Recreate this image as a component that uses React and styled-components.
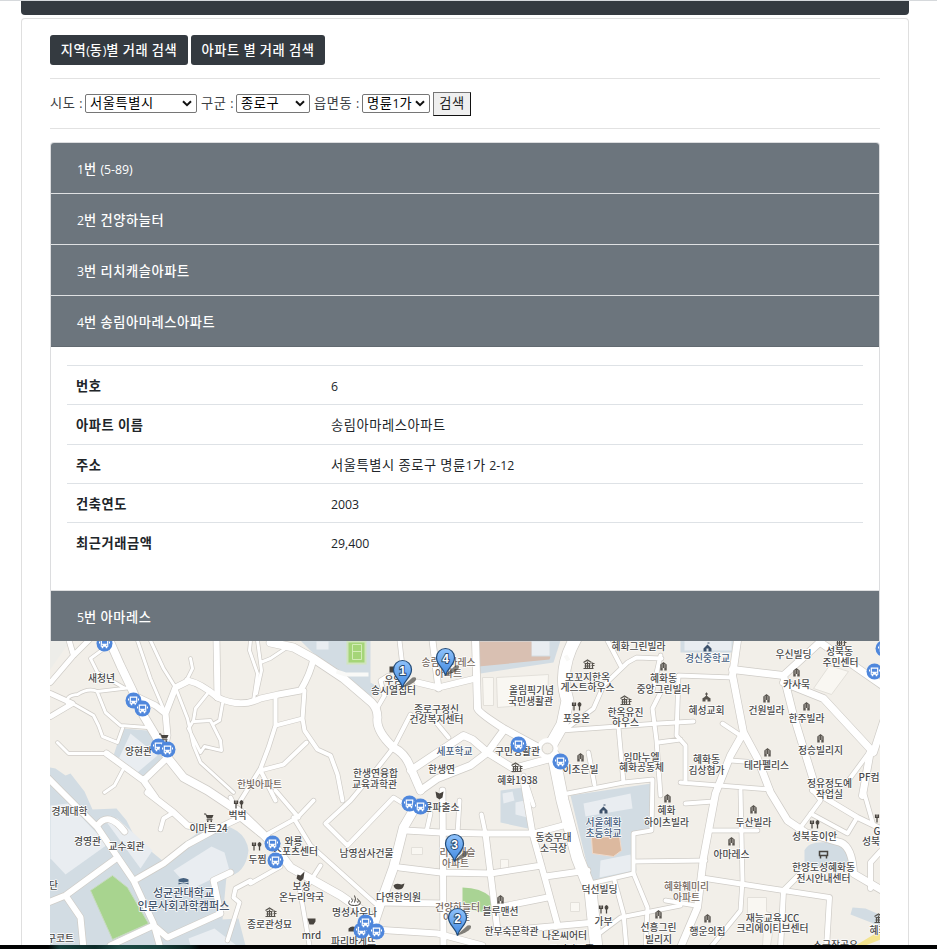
import React from 'react';
import styled, { createGlobalStyle } from 'styled-components';

const Global = createGlobalStyle`
  * { box-sizing: border-box; }
  html, body { margin: 0; background: #fff; overflow: hidden; }
  body { font: 12.3px/19px 'Open Sans', 'Noto Sans CJK KR', sans-serif; color: #212529; word-spacing: .4px; }
`;

const Page = styled.div`
  height: 949px;
  display: flex;
  flex-direction: column;
  border-top: 1px solid #d6d9dc;
  overflow: hidden;
`;
const NavEdge = styled.div`
  flex: 0 0 14px;
  margin: 0 28px 3px 21px;
  background: #343a40;
  border-radius: 0 0 4px 4px;
`;
const Card = styled.main`
  flex: 0 0 927px;
  margin: 0 28px 0 21px;
  border: 1px solid #dfdfdf;
  border-bottom: 0;
  border-radius: 4px 4px 0 0;
  padding: 16px 28px 0;
`;
const ButtonRow = styled.div`
  display: flex;
  gap: 3px;
  height: 44px;
  padding-bottom: 14px;
  border-bottom: 1px solid #e2e2e2;
`;
const TabButton = styled.button`
  width: ${(p) => p.$width}px;
  height: 30px;
  padding: 0;
  border: 0;
  border-radius: 3px;
  background: #343a40;
  color: #fff;
  font: inherit;
  font-weight: 500;
  word-spacing: inherit;
  white-space: nowrap;
`;
const SearchRow = styled.form`
  display: flex;
  align-items: center;
  height: 50px;
  border-bottom: 1px solid #e2e2e2;
  margin-bottom: 13px;
`;
const FieldLabel = styled.span`
  width: ${(p) => p.$width}px;
  white-space: nowrap;
  color: #3c4044;
`;
const Picker = styled.div`
  display: flex;
  align-items: center;
  justify-content: space-between;
  width: ${(p) => p.$width}px;
  height: 19px;
  margin-right: 4px;
  padding: 0 4px;
  border: 1px solid #767676;
  border-radius: 2px;
  background: #fff;
  color: #000;
  line-height: 17px;
  white-space: nowrap;
`;
const Chevron = styled.svg`
  flex: 0 0 10px;
  width: 10px;
  height: 7px;
`;
const SearchButton = styled.button`
  width: 38px;
  height: 24px;
  margin-left: -1px;
  padding: 0;
  border: 1px solid;
  border-color: #767676 #111 #111 #767676;
  background: #efefef;
  color: #222;
  font: inherit;
`;
const Accordion = styled.section`
  border: 1px solid #dcdddf;
  border-bottom: 0;
  border-radius: 4px 4px 0 0;
  overflow: hidden;
`;
const Item = styled.div`
  height: ${(p) => (p.$last ? 50 : 51)}px;
  padding: 17px 26px 0;
  background: #6c757d;
  color: #fff;
  font-weight: 500;
  border-bottom: ${(p) => (p.$last ? 0 : 1)}px solid ${(p) => (p.$open ? '#626a71' : '#dfe1e3')};
`;
const Detail = styled.div`
  height: 244px;
  padding: 18px 16px 0;
  border-bottom: 1px solid #dedfe0;
`;
const DetailRow = styled.div`
  display: grid;
  grid-template-columns: 255px 1fr;
  height: 39.3px;
  padding: 11px 9px 0;
  border-top: 1px solid #dee2e6;
`;
const Term = styled.div`
  font-weight: 600;
`;
const Value = styled.div``;
const KoreanRun = styled.span`
  font-family: 'Noto Sans CJK KR', sans-serif;
  font-size: 1.075em;
  letter-spacing: .6px;
  line-height: 1;
`;
const MapView = styled.svg`
  display: block;
  width: 830px;
  height: 304px;
  background: #f2efe9;
`;
const Taskbar = styled.footer`
  flex: 0 0 4px;
  background: linear-gradient(90deg, #020303 0 48px, #153f3b 60px, #0c2b29 95px, #1c4a44 120px, #17423d 155px, #0a211f 190px, #020303 200px);
`;

const Mixed = ({ children }) =>
  children.split(/([\uac00-\ud7a3]+)/).map((part, i) => (i % 2 ? <KoreanRun key={i}>{part}</KoreanRun> : part));

const MapLabel = styled.text`
  font: 500 ${(p) => p.$size || 9.8}px 'Noto Sans CJK KR', sans-serif;
  fill: ${(p) => p.$fill || '#484848'};
  word-spacing: 0;
  text-anchor: middle;
  paint-order: stroke;
  stroke: #fff;
  stroke-width: 1.4px;
  stroke-linejoin: round;
`;

const roads = [
  [5, 'M50 682L73 655L90 638M68 638L73 655M50 716L72 703L50 693'],
  [3, 'M67 704Q64 695 77 694Q88 687 97 691L131 687M105 647L90 658L97 672L123 687M97 692L105 712L120 725L147 727M72 703L93 715L98 725L102 736L117 742L122 728M57 742L68 753L106 753M123 768L114 785L104 792M137 640L150 678L165 713M150 640L163 668L175 687M190 658L192 668L186 680M175 687L187 718L193 745L200 762L233 792M207 693L195 708L193 720L188 728L200 752L204 746L221 750L220 740L210 720L194 721M222 703L219 720L212 724M250 640L249 650L257 673L253 700M257 640L261 670L256 693M260 662L270 658L285 648'],
  [6, 'M106 753L143 780L167 757M143 780L155 797M187 681L175 687L165 713L167 735L163 752M138 697L155 705L165 713M216 640L217 697'],
  [8, 'M108 638L120 665L132 690L143 715L155 735L167 757L183 777L207 790L240 812L272 843L290 867L340 895L373 918'],
  [6, 'M187 680Q201 683 217 697Q240 708 260 698L278 694L300 690Q310 673 313 658'],
  [8, 'M270 642L293 647L313 658L343 678L371 702Q377 708 377 717Q375 730 393 747Q405 753 410 767L420 790'],
  [4, 'M275 695L275 725L268 747L260 768L240 800M275 725L302 718L304 690M302 718L304 730L317 749L330 755L337 774L342 800M260 770L283 764L306 742M377 707L384 695L380 680L388 675M399 640L402 666M410 714L393 747L375 770L350 800L325 823L347 845L393 797L406 805M260 770L275 800M230 797L240 817'],
  [6, 'M417 682L438 687L475 678M432 640L438 688'],
  [7, 'M410 770L437 752L463 735L472 739L487 752L513 768L550 758M475 640L477 708Q478 712 503 728L540 748M420 790L437 778L470 765L487 752L503 730'],
  [4, 'M434 720L448 737M562 731L593 708L603 685L627 662L636 657L661 658M607 640L620 665M561 730L658 723L693 721M660 692L652 708L656 740L660 795M618 727L623 782M588 752L594 784M523 775L533 805'],
  [12, 'M575 638Q557 670 567 700L562 724L549 747M553 755L562 800L577 857L590 890L596 948'],
  [4, 'M567 793L623 782L652 779L651 830L633 833L633 873L647 907L645 948M660 655L652 690M658 742L680 739M678 675L676 735L685 745L685 782M678 675L732 677M722 723L740 735M730 760L757 762M680 782L770 789M665 900L695 905M633 861L705 860M685 803L713 801M710 830L757 830M740 790L742 880L740 910L710 947M870 750L845 784M863 790L873 825M800 827L820 800L812 789M810 813L847 833L856 818'],
  [7, 'M737 640L732 675L743 732L757 758L770 792L787 820L805 832L840 842Q852 847 853 873L882 890M743 732L730 755L715 793L703 857L697 907L680 947'],
  [7, 'M732 669L783 675L818 643M783 675L793 715L813 780M783 682L823 698L873 752L885 715M820 642L849 662L882 685M870 750L862 795'],
  [5, 'M812 790L857 817L882 829M880 851L870 862L870 888M705 878L783 890L829 897L826 948M803 870L783 890L780 948'],
  [6, 'M523 780L532 833L545 880L557 924M405 830L440 832L483 833L533 833L570 823M442 790L443 948M399 867L440 872L490 873L541 865M485 833L490 873L497 930M545 876L587 870M497 907L547 897M493 931L595 922M380 902L442 903M374 929L437 933L482 945'],
  [4, 'M481 814L485 833M590 883L633 873M600 932L620 917L680 905M614 880L623 913L626 948M430 813L426 831M459 800L457 833M293 817L310 845L377 905M268 833L297 817L313 800M320 865L306 887M250 883L280 866M299 887L309 945M275 790L298 817M227 940L239 902L233 897L235 888L250 880M173 812L163 818L160 829'],
  [9, 'M417 803L403 827L393 867L380 903L365 948'],
  [6, 'M45 775L60 790L97 827L133 880L153 923L160 948M45 903L65 895L117 857M65 895L80 917L83 948M137 878L163 863L187 844L213 830L240 817L260 833M110 945L153 925L167 937L220 913L213 880L230 872M97 825Q108 810 124 831M147 792L173 812L187 825L213 830'],
];

const labels = [
  [101, 681, '새청년'], [138, 754, '양현관'], [259, 787, '한빛아파트', '#76695f'], [69, 814, '경제대학'], [87, 844, '경영관'], [126, 849, '교수회관'], [208, 831, '이마트24'], [237, 818, '벅벅'],
  [183, 896, '성균관대학교', '#44546b', 11.1], [183, 909, '인문사회과학캠퍼스', '#44546b', 11.1], [53, 888, '단'], [60, 941, '구코트'], [257, 862, '두찜'], [293, 844, '와룡'], [295, 854, '스포츠센터'],
  [366, 856, '남영삼사건물'], [301, 889, '보성'], [301, 900, '온누리약국'], [269, 927, '종로관성묘'], [311, 938, 'mrd'], [354, 915, '명성사우나'], [353, 944, '파리바게뜨'], [398, 900, '다연한의원'], [441, 810, '륜파출소'],
  [457, 855, '리치캐슬', '#76695f'], [455, 866, '아파트', '#76695f'], [457, 910, '건양하늘터', '#76695f'], [456, 920, '아파트', '#76695f'], [500, 914, '블루맨션'], [511, 934, '한무숙문학관'], [564, 938, '나온씨어터'], [571, 952, '코너아트홀'],
  [553, 840, '동숭무대'], [553, 851, '소극장'], [603, 825, '서울혜화', '#455d7d'], [603, 836, '초등학교', '#455d7d'], [599, 892, '덕선빌딩'], [603, 924, '가부'], [658, 930, '선흥그린'], [658, 942, '빌리지'], [666, 813, '혜화'], [666, 825, '하이츠빌라'],
  [686, 889, '혜화훼미리', '#76695f'], [686, 900, '아파트', '#76695f'], [707, 934, '행운의집'], [731, 857, '아마레스'], [753, 825, '두산빌라'], [772, 921, '재능교육JCC'], [772, 931, '크리에이티브센터'], [814, 839, '성북동이안'], [823, 870, '한양도성혜화동'], [823, 881, '전시안내센터'], [882, 834, 'G25'], [875, 844, '성북동'], [878, 933, '혜화'], [835, 948, '소극장공유'],
  [829, 786, '정유정도예'], [829, 797, '작업실'], [873, 780, 'PF컴퍼'], [820, 753, '정승빌리지'], [806, 721, '한주빌라'], [796, 687, '카사묵'], [793, 657, '우신빌딩'], [839, 654, '성북동'], [840, 665, '주민센터'], [766, 713, '건원빌라'], [766, 768, '테라펠리스'], [706, 713, '혜성교회'], [707, 661, '경신중학교', '#455d7d'], [706, 762, '혜화동'], [706, 773, '김상협가'],
  [638, 649, '혜화그린빌라'], [663, 681, '혜화동'], [663, 692, '중앙그린빌라'], [587, 680, '모꼬지한옥'], [587, 690, '게스트하우스'], [625, 715, '한옥유진'], [625, 725, '하우스'], [576, 721, '포응온'], [641, 760, '임마누엘'], [641, 770, '혜화공동체'], [580, 772, '이조은빌'], [517, 754, '구민생활관'], [517, 783, '혜화1938'], [531, 693, '올림픽기념'], [530, 704, '국민생활관'],
  [454, 754, '세포학교', '#455d7d'], [441, 772, '한생연'], [436, 712, '종로구정신'], [436, 722, '건강복지센터'], [375, 776, '한생연융합'], [374, 787, '교육과학관'], [393, 683, '우암'], [393, 693, '송시열집터'], [448, 665, '송림아마레스', '#76695f'], [448, 676, '아파트', '#76695f'],
];

const buses = [[104, 643], [133, 700], [142, 708], [158, 746], [167, 749], [272, 843], [275, 860], [409, 803], [420, 806], [518, 744], [560, 761], [874, 671], [883, 648], [361, 930], [365, 922], [376, 931]];
const pins = [[402, 672, 1], [445, 660, 4], [454, 846, 3], [457, 920, 2]];
const homes = [[663, 666], [766, 698], [796, 672], [806, 706], [820, 738], [767, 752], [580, 757], [500, 899], [753, 809], [731, 841], [658, 914], [707, 918], [667, 798]];
const hanoks = [[588, 664], [625, 700], [516, 767], [270, 912], [879, 918], [840, 641]];
const foods = [[576, 706], [603, 909], [238, 804], [256, 846], [814, 824], [879, 818]];
const carts = [[163, 737], [208, 817]];
const schools = [[707, 647], [603, 809]];
const churches = [[706, 697]];

const Bus = ({ x, y }) => (
  <g transform={`translate(${x} ${y})`}>
    <circle r="8" fill="#4f87dc" />
    <path d="M-3.8-4h7.6v7.2h-1v1.5H1.2V3.2h-2.4v1.5h-1.6V3.2h-1Z" fill="#fff" />
    <path d="M-2.6-2.7h5.2v3h-5.2ZM-2.8 1.3h1.2v1h-1.2ZM1.6 1.3h1.2v1H1.6Z" fill="#4f87dc" />
    <path d="M-5-2v2M5-2v2" stroke="#fff" />
  </g>
);
const Home = ({ x, y }) => (
  <g transform={`translate(${x} ${y})`}>
    <path d="M-3.200 4v-6L0-4.500l3.200 2.500v6H.8V1.500H-.8V4Z" fill="#5a5650" />
    <path d="M-2-1.500h1.300M.7-1.500H2M-2 .5h1.300M.7 .5H2" stroke="#e4e1db" strokeWidth=".9" />
  </g>
);
const Hanok = ({ x, y }) => (
  <path transform={`translate(${x} ${y})`} d="M-5-2L-1-4.500L3-2M-4-1h6M-3-1v5M1-1v5M-4 1.500h6M-1-3v7M4 4v-6M3-1h3M3 1h3M-5 4h10" fill="none" stroke="#57534d" strokeWidth="1.200" />
);
const Food = ({ x, y }) => (
  <g transform={`translate(${x} ${y})`} fill="none" stroke="#48443f">
    <path d="M-4-4v3h3v-3M-2.500-4v8" strokeWidth="1.200" />
    <path d="M3-1v5" strokeWidth="1.300" />
    <ellipse cx="3" cy="-2" rx="1.400" ry="2" fill="#48443f" />
  </g>
);
const Cart = ({ x, y }) => (
  <g transform={`translate(${x} ${y})`} fill="#48443f">
    <path d="M-4.500-4h2l.7 1.500H5L3.500 1h-5L-3-3h-1.500ZM-1.800 1.700H4v1h-6ZM-1.500 3h1.500v1.500h-1.500ZM2 3h1.500v1.500H2Z" />
  </g>
);
const School = ({ x, y }) => (
  <path transform={`translate(${x} ${y})`} d="M0-5v2l2 2 2 2v3H1V1h-2v3h-3V1l2-2 2-2M0-5h2v1H0" fill="#3d526c" />
);
const Church = ({ x, y }) => (
  <path transform={`translate(${x} ${y})`} d="M-.5-5h1v1h1v1h-1v1.300l2 1.700 1.500.800V4H1V2h-2v2h-3V.800L-2.500 0l2-1.700V-3h-1v-1h1Z" fill="#57534d" />
);
const Pin = ({ x, y, n }) => (
  <g transform={`translate(${x} ${y})`}>
    <path d="M0 14L10 5Q15 4 13 8Q10 12 0 15Z" fill="#35332f" opacity=".6" />
    <path d="M0 15C-2 7-9 5-9-3A9 9 0 0 1 9-3C9 5 2 7 0 15Z" fill="url(#pinFill)" stroke="#244c78" strokeWidth="1.200" />
    <text y="2" textAnchor="middle" fontFamily="Liberation Sans, sans-serif" fontSize="12" fontWeight="700" fill="#fff" stroke="#294a70" strokeWidth="1.800" paintOrder="stroke">{n}</text>
  </g>
);

const each = (Part, points) => points.map(([x, y], i) => <Part key={i} x={x} y={y} />);

const NeighborhoodMap = () => (
  <MapView viewBox="49.500 640.500 830 304">
    <defs>
      <linearGradient id="pinFill" x2="0" y2="1">
        <stop stopColor="#8fc2fb" />
        <stop offset="1" stopColor="#4189e0" />
      </linearGradient>
    </defs>
    <path d="M49 640H70L49 670Z" fill="#edede9" />
    <g fill="#d2dce3">
      <path d="M49 767L55 768L65 775L70 773L84 791L92 809L116 808L126 820L135 838L163 861L180 845L210 823Q245 825 248 850Q245 874 226 876L222 919L238 918L245 945H49Z" />
      <path d="M122 728L147 730L166 755L143 778L112 758Z" />
      <path d="M300 640H370V682L385 691L364 697L312 652Z" />
      <path d="M474 640H560L553 662L480 673Z" />
      <path d="M570 795L651 783L650 830L633 833L636 870L591 883Z" />
      <path d="M500 790L522 787L532 829L500 822Z" />
      <path d="M804 850Q808 840 829 842Q848 845 850 861L840 870L804 864Z" />
      <path d="M680 640H735V652H680Z" />
      <path d="M852 907L865 908L881 915V926L850 914Z" />
    </g>
    <g fill="#e9edf1">
      <path d="M130 733L157 755L137 772L117 761Z" />
      <path d="M50 805L68 803L107 844L65 874L50 858Z" />
      <path d="M105 820L117 818L152 850L140 868Z" />
      <path d="M173 870L211 846L224 852L229 870L190 889Z" />
      <path d="M188 938L214 928L236 945H190Z" />
      <path d="M316 641H328V649H316ZM531 641H549V655H531ZM583 803L630 793L632 808L585 816ZM600 860L630 854L633 870L599 877ZM502 793L512 791L514 800L503 803ZM515 802L524 800L527 817L515 814ZM684 640H731V650H684Z" />
    </g>
    <path d="M112 875L127 887L148 923L112 939L90 890Z" fill="#a8d48f" stroke="#c8dcbf" />
    <path d="M347 641H365V663H347Z" fill="#a5d578" stroke="#d0e4bd" strokeWidth="2" />
    <path d="M352 644H361V659H352ZM352 651H361" fill="none" stroke="#d3ecb6" />
    <path d="M462 887Q480 887 491 897L491 913L462 908Z" fill="#a9d394" />
    <path d="M477 641H531V656H550L549 659L478 666Z" fill="#d9c0b2" />
    <path d="M591 837L619 836L621 850L613 856L592 853Z" fill="#dcb99f" stroke="#f0d9c9" />
    <g fill="#f9f7f2" stroke="#e3e0da">
      <path d="M482 677H493V705H483ZM496 677L548 674L547 700L510 706L497 707ZM813 688L829 665L848 671L831 694ZM500 859H508V868H500ZM570 902H579V911H570ZM411 847H422V854H411ZM747 897H766V911L775 914L770 945H762L764 915H747Z" />
    </g>
    <path d="M855 945L880 930V939L865 945Z" fill="#f4e48f" />
    <g fill="none" strokeLinejoin="round" strokeLinecap="round">
      {roads.map(([w, d], i) => <path key={i} d={d} stroke="#cfccc7" strokeWidth={w + 1.4} />)}
      {roads.map(([w, d], i) => <path key={i} d={d} stroke="#fff" strokeWidth={w} />)}
    </g>
    <circle cx="547" cy="748" r="8" fill="#f2efe9" stroke="#fff" strokeWidth="5" />
    <circle cx="547" cy="748" r="5.500" fill="#f2efe9" stroke="#d5d2cc" />
    <path d="M336 671L345 674H368M565 655L568 660" fill="none" stroke="#f9f9f7" strokeWidth="4" />
    {each(Home, homes)}
    {each(Hanok, hanoks)}
    {each(Food, foods)}
    {each(Cart, carts)}
    {each(School, schools)}
    {each(Church, churches)}
    <g fill="#48443f">
      <path d="M389 666h9v6h-9ZM435 791l4 2 4-2-1 6-3 2-3-2ZM297 874l3 1 4-4-1 7-3 3-4-3ZM393 885q2-3 8-1l3-1-1 3q-1 3-5 3-4 0-5-4ZM307 918h8v3l-2 3h-4ZM348 928q4-4 9 0v3h-9Z" />
      <path d="M351 902q2-2 0-4M354 902q2-4 0-7M357 902q2-2 0-4M349 900q-3 5 5 5q8 0 5-5" fill="none" stroke="#48443f" />
      <path d="M178 879q5-3 10 0v5q-5-2-10 0Z" fill="#46617f" />
      <path d="M177 881.500q6 2 12 0" fill="none" stroke="#d2dce3" />
      <path d="M819 851h8v4h-8ZM820 855v3M826 855v3" fill="none" stroke="#48443f" strokeWidth="1.500" />
    </g>
    {labels.map(([x, y, text, fill, size], i) => <MapLabel key={i} x={x} y={y} $fill={fill} $size={size}>{text}</MapLabel>)}
    {each(Bus, buses)}
    {pins.map(([x, y, n]) => <Pin key={n} x={x} y={y} n={n} />)}
  </MapView>
);

const details = [['번호', '6'], ['아파트 이름', '송림아마레스아파트'], ['주소', '서울특별시 종로구 명륜1가 2-12'], ['건축연도', '2003'], ['최근거래금액', '29,400']];
const fields = [['시도 :', 35, '서울특별시', 112], ['구군 :', 35, '종로구', 74], ['읍면동 :', 48, '명륜1가', 68]];

export default function App() {
  return (
    <>
      <Global />
      <Page>
        <NavEdge />
        <Card>
          <ButtonRow>
            <TabButton $width={138}><Mixed>지역(동)별 거래 검색</Mixed></TabButton>
            <TabButton $width={134}><Mixed>아파트 별 거래 검색</Mixed></TabButton>
          </ButtonRow>
          <SearchRow>
            {fields.map(([label, labelWidth, value, width]) => (
              <React.Fragment key={label}>
                <FieldLabel $width={labelWidth}><Mixed>{label}</Mixed></FieldLabel>
                <Picker $width={width} role="combobox" aria-label={label} aria-expanded="false" tabIndex={0}>
                  <span><Mixed>{value}</Mixed></span>
                  <Chevron viewBox="0 0 10 7"><path d="M1 1.200L5 5.200L9 1.200" fill="none" stroke="#111" strokeWidth="2" /></Chevron>
                </Picker>
              </React.Fragment>
            ))}
            <SearchButton type="button"><Mixed>검색</Mixed></SearchButton>
          </SearchRow>
          <Accordion>
            <Item><Mixed>1번 (5-89)</Mixed></Item>
            <Item><Mixed>2번 건양하늘터</Mixed></Item>
            <Item><Mixed>3번 리치캐슬아파트</Mixed></Item>
            <Item $open><Mixed>4번 송림아마레스아파트</Mixed></Item>
            <Detail>
              {details.map(([term, value]) => (
                <DetailRow key={term}>
                  <Term><Mixed>{term}</Mixed></Term>
                  <Value><Mixed>{value}</Mixed></Value>
                </DetailRow>
              ))}
            </Detail>
            <Item $last><Mixed>5번 아마레스</Mixed></Item>
          </Accordion>
          <NeighborhoodMap />
        </Card>
        <Taskbar />
      </Page>
    </>
  );
}
